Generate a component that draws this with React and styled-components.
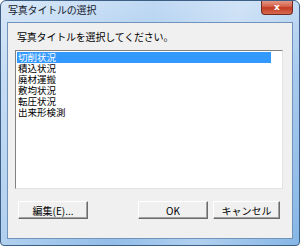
import styled, { createGlobalStyle } from "styled-components";

const GlobalStyle = createGlobalStyle`
    html, body {
        margin: 0;
        padding: 0;
        background: #ffffff;
    }
    body {
        font-family: "Noto Sans CJK JP", "Liberation Sans", sans-serif;
    }
`;

const Frame = styled.div`
    width: 300px;
    height: 246px;
    box-sizing: border-box;
    display: flex;
    flex-direction: column;
    border: 1px solid #3d5f86;
    border-radius: 6px 6px 4px 4px;
    background:
        linear-gradient(100deg, rgba(255, 255, 255, 0.45) 0%, rgba(255, 255, 255, 0.1) 45%, rgba(255, 255, 255, 0.35) 70%, rgba(255, 255, 255, 0) 100%),
        linear-gradient(180deg, #b9d5f2 0%, #9cc3ec 30%, #86b6e6 100%);
    overflow: hidden;
`;

const TitleBar = styled.div`
    height: 21px;
    display: flex;
    align-items: flex-start;
    justify-content: space-between;
    padding-left: 7px;
`;

const Title = styled.div`
    font-size: 10px;
    line-height: 18px;
    color: #15202e;
    letter-spacing: -0.2px;
`;

const CloseButton = styled.div`
    width: 32px;
    height: 15px;
    margin-right: 6px;
    margin-top: -1px;
    box-sizing: border-box;
    border: 1px solid #6e2b22;
    border-top: none;
    border-radius: 0 0 4px 4px;
    background: linear-gradient(180deg, #e6a090 0%, #d4644e 45%, #c23b22 55%, #d66a4f 100%);
    display: flex;
    align-items: center;
    justify-content: center;
    color: #fff;
    font-family: "DejaVu Sans", sans-serif;
    font-size: 9px;
    font-weight: bold;
`;

const Client = styled.div`
    flex: 1;
    margin: 0 6px 6px;
    box-sizing: border-box;
    border: 1px solid #6f93bb;
    background: #f0f0f0;
    display: flex;
    flex-direction: column;
    padding: 0 9px 0 7px;
`;

const Prompt = styled.div`
    font-size: 10px;
    line-height: 12px;
    color: #000;
    padding: 8px 0 0 2px;
    height: 27px;
    box-sizing: border-box;
    letter-spacing: -0.2px;
`;

const ListBox = styled.div`
    height: 139px;
    box-sizing: border-box;
    background: #fff;
    border-top: 1px solid #828282;
    border-left: 1px solid #828282;
    border-right: 1px solid #e3e3e3;
    border-bottom: 1px solid #e3e3e3;
    padding: 1px 11px 0 1px;
`;

const Item = styled.div`
    height: 11px;
    font-size: 9.5px;
    line-height: 11px;
    padding-left: 1px;
    color: ${(p) => (p.$selected ? "#ffffff" : "#000000")};
    background: ${(p) => (p.$selected ? "#3399ff" : "transparent")};
    white-space: nowrap;
`;

const ButtonRow = styled.div`
    display: flex;
    align-items: center;
    padding: 12px 0 0 3px;
`;

const Button = styled.div`
    width: ${(p) => p.$width}px;
    height: 18px;
    margin-left: ${(p) => p.$gap || 0}px;
    box-sizing: border-box;
    border-top: 1px solid #ffffff;
    border-left: 1px solid #ffffff;
    border-right: 1px solid #6b6b6b;
    border-bottom: 1px solid #6b6b6b;
    box-shadow: inset -1px -1px 0 #a0a0a0;
    background: #f0f0f0;
    display: flex;
    align-items: center;
    justify-content: center;
    font-size: 10px;
    color: #000;
`;

const items = ["切削状況", "積込状況", "廃材運搬", "敷均状況", "転圧状況", "出来形検測"];

export default function App() {
    return (
        <>
            <GlobalStyle />
            <Frame>
                <TitleBar>
                    <Title>写真タイトルの選択</Title>
                    <CloseButton>x</CloseButton>
                </TitleBar>
                <Client>
                    <Prompt>写真タイトルを選択してください。</Prompt>
                    <ListBox>
                        {items.map((name, i) => (
                            <Item key={name} $selected={i === 0}>
                                {name}
                            </Item>
                        ))}
                    </ListBox>
                    <ButtonRow>
                        <Button $width={70}>編集(E)...</Button>
                        <Button $width={70} $gap={50}>OK</Button>
                        <Button $width={67} $gap={5}>キャンセル</Button>
                    </ButtonRow>
                </Client>
            </Frame>
        </>
    );
}
